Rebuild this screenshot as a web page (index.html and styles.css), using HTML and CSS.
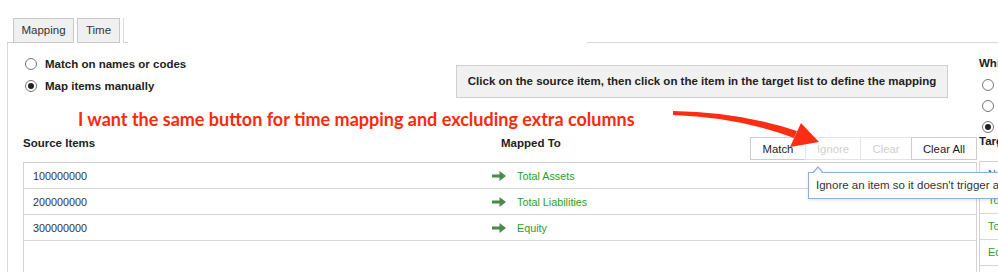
FILE: index.html
```
<!DOCTYPE html>
<html lang="en">
  <head>
    <meta charset="UTF-8" />
    <title>Mapping</title>
    <link rel="stylesheet" href="styles.css">
  </head>
  <body>
    <!-- tab strip -->
    <div class="tabbar">
      <div class="tb-line-left"></div>
      <div class="tab">Mapping</div>
      <div class="tab tab-time">Time</div>
      <div class="tab-ghost"></div>
      <div class="tb-gap"></div>
      <div class="tb-line-right"></div>
    </div>

    <div class="panel">
      <div class="main">
        <div class="top">
          <div class="radios">
            <label class="radio-row"><span class="radio"></span>Match on names or codes</label>
            <label class="radio-row"><span class="radio checked"></span>Map items manually</label>
          </div>
          <div class="info">Click on the source item, then click on the item in the target list to define the mapping</div>
        </div>

        <p class="note">I want the same button for time mapping and excluding extra columns</p>

        <div class="toolbar">
          <div class="h-source">Source Items</div>
          <div class="h-mapped">Mapped To</div>
          <div class="btns">
            <button class="btn">Match</button>
            <button class="btn disabled">Ignore</button>
            <button class="btn disabled">Clear</button>
            <button class="btn">Clear All</button>
          </div>
        </div>

        <div class="table">
          <div class="row">
            <div class="src">100000000</div>
            <div class="dst"><svg class="go" viewBox="0 0 14 10"><path d="M0 3.4h7.5V0L14 5l-6.5 5V6.6H0z"/></svg>Total Assets</div>
          </div>
          <div class="row">
            <div class="src">200000000</div>
            <div class="dst"><svg class="go" viewBox="0 0 14 10"><path d="M0 3.4h7.5V0L14 5l-6.5 5V6.6H0z"/></svg>Total Liabilities</div>
          </div>
          <div class="row">
            <div class="src">300000000</div>
            <div class="dst"><svg class="go" viewBox="0 0 14 10"><path d="M0 3.4h7.5V0L14 5l-6.5 5V6.6H0z"/></svg>Equity</div>
          </div>
        </div>
      </div>

      <div class="side">
        <div class="side-head">Which target list?</div>
        <label class="side-radio"><span class="radio"></span>Existing items</label>
        <label class="side-radio"><span class="radio"></span>New items</label>
        <label class="side-radio"><span class="radio checked"></span>Both</label>
        <div class="side-head target-head">Target Items</div>
        <div class="tlist">
          <div class="trow new">New item</div>
          <div class="trow">Total Assets</div>
          <div class="trow">Total Liabilities</div>
          <div class="trow">Equity</div>
        </div>
      </div>
    </div>

    <div class="tooltip">Ignore an item so it doesn't trigger an error</div>

    <!-- red annotation arrow -->
    <svg class="callout" viewBox="0 0 998 272">
      <path d="M673 111 Q740 112 797 131 L794 138 Q738 117 673 115 Z" />
      <polygon points="801,123 790,147 819,142" />
    </svg>
  </body>
</html>
```

FILE: styles.css
```
* {
  box-sizing: border-box;
}

body {
  margin: 0;
  width: 998px;
  height: 272px;
  overflow: hidden;
  position: relative;
  background: #fff;
  color: #222;
  font-family: "Liberation Sans", Arial, sans-serif;
  font-size: 10.8px;
}

/* tabs */
.tabbar {
  display: flex;
  align-items: flex-end;
  height: 43px;
}

.tb-line-left {
  width: 6px;
  margin-left: 7px;
  border-bottom: 1px solid #d0d0d0;
}

.tab {
  width: 61px;
  height: 25px;
  border: 1px solid #c9c9c9;
  background: #f0f0f0;
  color: #333;
  font-size: 11.5px;
  line-height: 23px;
  text-align: center;
}

.tab-time {
  width: 43px;
  margin-left: 3px;
}

.tab-ghost {
  width: 5px;
  height: 25px;
  margin-left: 3px;
  border-left: 1px solid #dcdcdc;
  border-bottom: 1px solid #d0d0d0;
}

.tb-gap {
  width: 459px;
}

.tb-line-right {
  flex: 1;
  border-bottom: 1px solid #d6d6d6;
}

/* panel */
.panel {
  display: grid;
  grid-template-columns: 969px 1fr;
  margin-left: 7px;
  border-left: 1px solid #dadada;
  height: 229px;
}

.top {
  display: flex;
}

.radios {
  padding: 10px 0 0 17px;
}

.radio-row {
  display: flex;
  align-items: center;
  height: 22px;
  font-weight: bold;
  font-size: 11.5px;
}

.radio {
  display: inline-flex;
  align-items: center;
  justify-content: center;
  width: 12px;
  height: 12px;
  margin-right: 8px;
  border: 1px solid #777;
  border-radius: 50%;
  background: #fff;
}

.radio.checked::after {
  content: "";
  width: 6px;
  height: 6px;
  border-radius: 50%;
  background: #222;
}

.info {
  width: 492px;
  height: 33px;
  margin: 22px 29px 0 auto;
  border: 1px solid #cfcfcf;
  background: #f1f1f1;
  font-weight: bold;
  font-size: 11.5px;
  line-height: 31px;
  text-align: center;
}

.note {
  margin: 9px 0 0 70px;
  color: #fb2a0c;
  font-family: Lato, "Open Sans", sans-serif;
  font-weight: bold;
  font-size: 18px;
  line-height: 24px;
}

/* toolbar */
.toolbar {
  display: flex;
  align-items: flex-start;
  height: 23px;
  margin-top: 6px;
  font-weight: bold;
  font-size: 11.5px;
  line-height: 13px;
}

.h-source {
  width: 478px;
  margin-left: 15px;
}

.btns {
  display: flex;
  margin-left: auto;
}

.btn {
  width: 56px;
  height: 23px;
  padding: 0;
  margin-left: -1px;
  border: 1px solid #cdcdcd;
  background: #fff;
  color: #222;
  font-family: "Liberation Sans", Arial, sans-serif;
  font-size: 11.3px;
}

.btn:first-child {
  margin-left: 0;
}

.btn.disabled {
  width: 56px;
  border-color: #e4e4e4;
  color: #cfcfcf;
}

.btn.disabled + .btn.disabled {
  width: 52px;
}

.btn:last-child {
  width: 66px;
}

/* source table */
.table {
  width: 954px;
  height: 120px;
  margin: 2px 0 0 15px;
  border: 1px solid #d3d3d3;
  border-bottom: none;
}

.row {
  display: grid;
  grid-template-columns: 468px 1fr;
  align-items: center;
  height: 26px;
  border-bottom: 1px solid #d6d6d6;
  color: #333;
}

.src {
  padding-left: 9px;
}

.dst {
  display: flex;
  align-items: center;
  color: #2ba02b;
}

.go {
  width: 14px;
  height: 10px;
  margin-right: 11px;
  fill: #4a8a4a;
}

/* right column */
.side {
  padding: 12px 0 0 2px;
  white-space: nowrap;
}

.side-head {
  font-weight: bold;
  font-size: 11.5px;
  line-height: 16px;
}

.side-radio {
  display: flex;
  align-items: center;
  height: 21px;
  padding-left: 3px;
}

.side-radio:first-of-type {
  margin-top: 3px;
}

.target-head {
  margin-top: -2px;
  line-height: 13px;
}

.tlist {
  width: 300px;
  height: 120px;
  margin-top: 13px;
  border: 1px solid #d3d3d3;
}

.trow {
  height: 26px;
  padding-left: 8px;
  border-bottom: 1px solid #d6d6d6;
  line-height: 25px;
  color: #2ba02b;
}

.trow.new {
  color: #2b56c8;
}

/* tooltip over the list */
.tooltip {
  position: absolute;
  left: 808px;
  top: 172px;
  height: 27px;
  padding: 0 8px 0 7px;
  border: 1px solid #8eafd8;
  background: #fff;
  color: #333;
  font-size: 11.5px;
  line-height: 25px;
  white-space: nowrap;
  box-shadow: 0 1px 3px rgba(0, 0, 0, 0.12);
}

.tooltip::before,
.tooltip::after {
  content: "";
  position: absolute;
  left: 3px;
  top: -7px;
  border: 6px solid transparent;
  border-top: 0;
  border-bottom: 7px solid #8eafd8;
}

.tooltip::after {
  left: 4px;
  top: -5px;
  border-width: 0 5px 6px;
  border-bottom-color: #fff;
}

.callout {
  position: absolute;
  left: 0;
  top: 0;
  width: 998px;
  height: 272px;
  fill: #fb2d12;
  pointer-events: none;
}
```
